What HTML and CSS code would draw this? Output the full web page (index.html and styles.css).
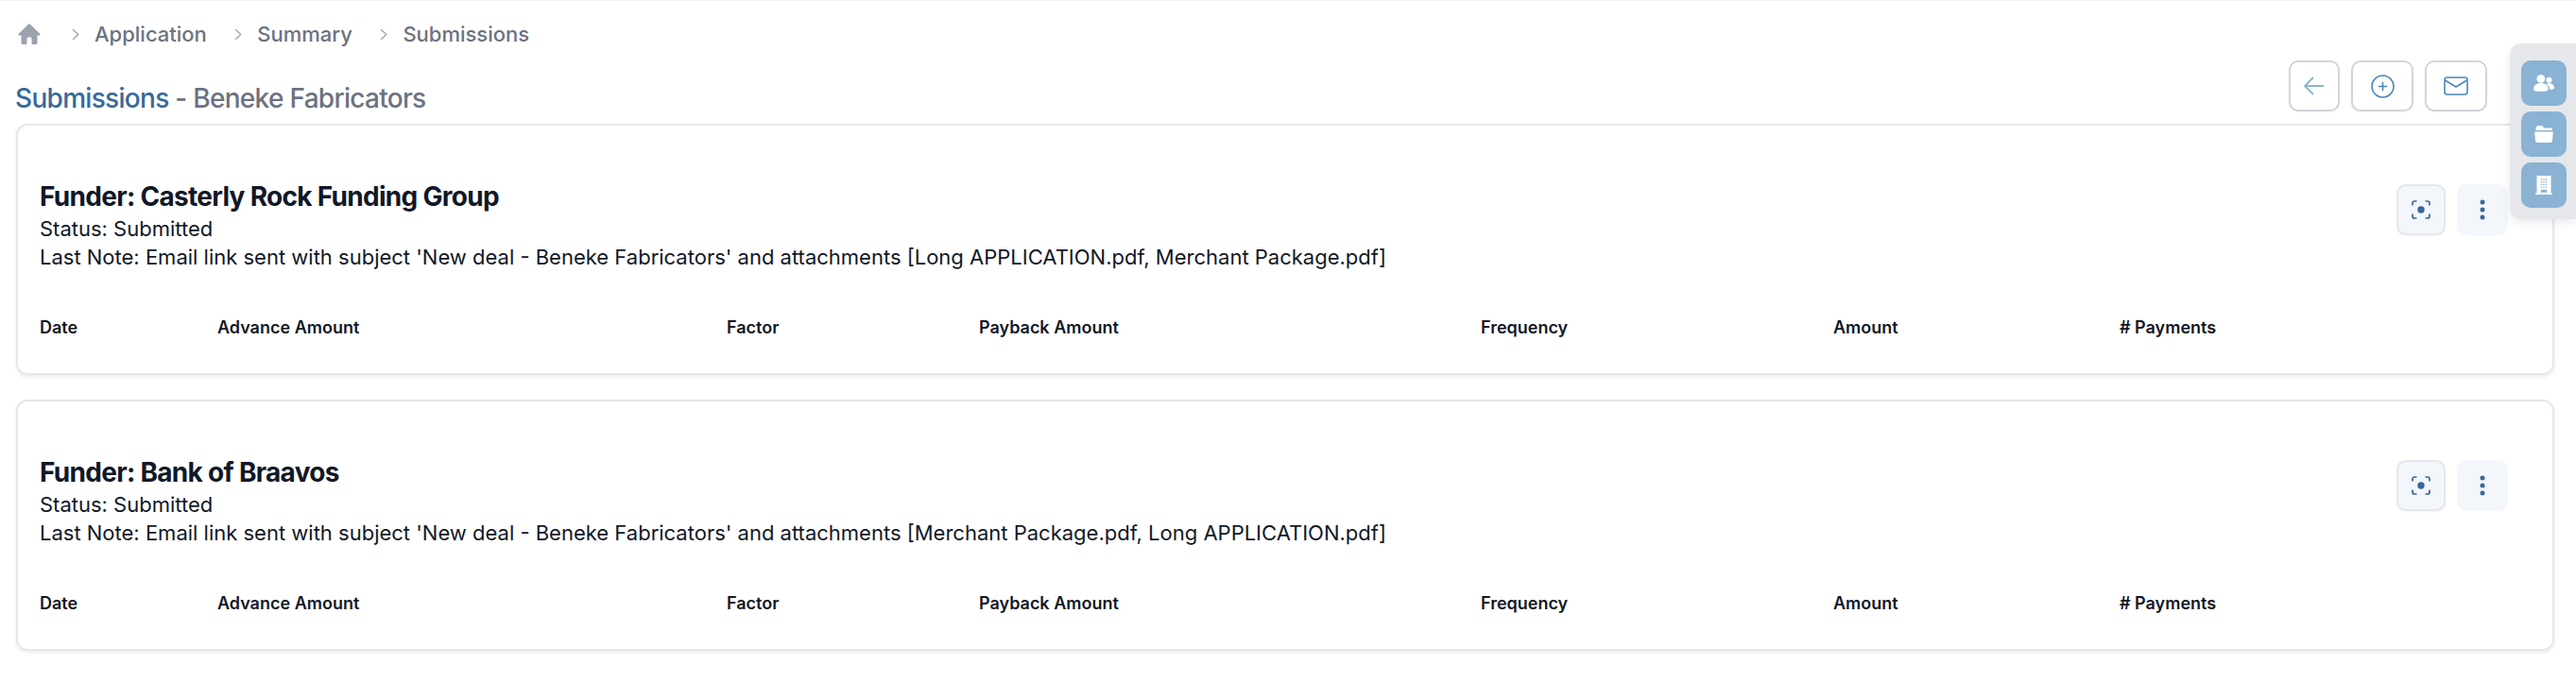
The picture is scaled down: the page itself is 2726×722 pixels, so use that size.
FILE: index.html
```html
<!DOCTYPE html>
<html lang="en">
<head>
    <meta charset="UTF-8">
    <meta name="viewport" content="width=device-width, initial-scale=1.0">
    <title>Submissions</title>
    <link rel="stylesheet" href="styles.css">
</head>
<body>
    <!-- Breadcrumb -->
    <nav class="breadcrumb">
        <svg class="home-icon" viewBox="0 0 24 24"><path d="M11.300 1.600a1 1 0 0 1 1.400 0l10.600 10.200c.6.6.2 1.700-.7 1.700H20.500v8.300c0 .7-.5 1.200-1.200 1.200h-3.600c-.7 0-1.200-.5-1.200-1.200v-5.100c0-.7-.5-1.200-1.200-1.200h-2.600c-.7 0-1.200.5-1.200 1.200v5.100c0 .7-.5 1.200-1.200 1.200H4.700c-.7 0-1.200-.5-1.200-1.200v-8.300H1.400c-.9 0-1.300-1.100-.7-1.700z"/></svg>
        <svg class="chevron" viewBox="0 0 10 16"><path d="M1.500 1.500 8.500 8l-7 6.500"/></svg>
        <span class="crumb">Application</span>
        <svg class="chevron" viewBox="0 0 10 16"><path d="M1.500 1.500 8.500 8l-7 6.500"/></svg>
        <span class="crumb">Summary</span>
        <svg class="chevron" viewBox="0 0 10 16"><path d="M1.500 1.500 8.500 8l-7 6.500"/></svg>
        <span class="crumb">Submissions</span>
    </nav>

    <!-- Page title and actions -->
    <header class="page-header">
        <h1 class="page-title"><span class="title-accent">Submissions</span> - Beneke Fabricators</h1>
        <div class="header-actions">
            <button class="header-btn header-btn-small">
                <svg class="icon-back" viewBox="0 0 24 24"><path d="M22 12H2M11 3l-9 9 9 9"/></svg>
            </button>
            <button class="header-btn">
                <svg class="icon-add" viewBox="0 0 24 24"><circle cx="12" cy="12" r="11"/><path d="M12 7.500v9M7.500 12h9"/></svg>
            </button>
            <button class="header-btn">
                <svg class="icon-mail" viewBox="0 0 26 20"><rect x="1" y="1" width="24" height="18" rx="2.500"/><path d="m1.500 4 11.500 7 11.500-7"/></svg>
            </button>
        </div>
    </header>

    <!-- Submission cards -->
    <section class="card">
        <div class="card-top">
            <div class="card-info">
                <h2 class="funder">Funder: Casterly Rock Funding Group</h2>
                <div class="info-line">Status: Submitted</div>
                <div class="info-line">Last Note: Email link sent with subject 'New deal - Beneke Fabricators' and attachments [Long APPLICATION.pdf, Merchant Package.pdf]</div>
            </div>
            <div class="card-actions">
                <button class="card-btn card-btn-outlined">
                    <svg class="icon-focus" viewBox="0 0 20 20"><path d="M1 5.500V3a2 2 0 0 1 2-2h2.500M14.500 1H17a2 2 0 0 1 2 2v2.500M19 14.500V17a2 2 0 0 1-2 2h-2.500M5.500 19H3a2 2 0 0 1-2-2v-2.500"/><circle class="dot" cx="10" cy="10" r="3.700"/></svg>
                </button>
                <button class="card-btn">
                    <svg class="icon-dots" viewBox="0 0 6 22"><circle cx="3" cy="3" r="2.500"/><circle cx="3" cy="11" r="2.500"/><circle cx="3" cy="19" r="2.500"/></svg>
                </button>
            </div>
        </div>
        <div class="quote-head">
            <span>Date</span>
            <span>Advance Amount</span>
            <span>Factor</span>
            <span>Payback Amount</span>
            <span>Frequency</span>
            <span>Amount</span>
            <span># Payments</span>
        </div>
    </section>

    <section class="card">
        <div class="card-top">
            <div class="card-info">
                <h2 class="funder">Funder: Bank of Braavos</h2>
                <div class="info-line">Status: Submitted</div>
                <div class="info-line">Last Note: Email link sent with subject 'New deal - Beneke Fabricators' and attachments [Merchant Package.pdf, Long APPLICATION.pdf]</div>
            </div>
            <div class="card-actions">
                <button class="card-btn card-btn-outlined">
                    <svg class="icon-focus" viewBox="0 0 20 20"><path d="M1 5.500V3a2 2 0 0 1 2-2h2.500M14.500 1H17a2 2 0 0 1 2 2v2.500M19 14.500V17a2 2 0 0 1-2 2h-2.500M5.500 19H3a2 2 0 0 1-2-2v-2.500"/><circle class="dot" cx="10" cy="10" r="3.700"/></svg>
                </button>
                <button class="card-btn">
                    <svg class="icon-dots" viewBox="0 0 6 22"><circle cx="3" cy="3" r="2.500"/><circle cx="3" cy="11" r="2.500"/><circle cx="3" cy="19" r="2.500"/></svg>
                </button>
            </div>
        </div>
        <div class="quote-head">
            <span>Date</span>
            <span>Advance Amount</span>
            <span>Factor</span>
            <span>Payback Amount</span>
            <span>Frequency</span>
            <span>Amount</span>
            <span># Payments</span>
        </div>
    </section>

    <!-- Floating side panel -->
    <aside class="side-panel">
        <button class="side-btn">
            <svg viewBox="0 0 24 20"><circle cx="8.500" cy="5" r="4.800"/><path d="M0 17c0-4.500 3.500-7 8.500-7s8.500 2.500 8.500 7c0 1.500-1.500 2.500-8.500 2.500S0 18.500 0 17z"/><circle cx="18" cy="6.500" r="3.300"/><path d="M14.500 11c1-.5 2.200-.8 3.500-.8 3.500 0 6 2 6 5.300 0 1.200-1.200 2-5 2 0-2.500-1.500-4.800-4.500-6.500z"/></svg>
        </button>
        <button class="side-btn">
            <svg viewBox="-1 -1 22 20"><path d="M1.500 5V2.500C1.500 1.100 2.600 0 4 0h3c1 0 1.600.4 2.200 1.200L10 2.500h7c1.200 0 2 .8 2 2V5z"/><path d="M.2 6.500h19.600L19 16c-.1 1.200-1 2-2.200 2H3.200C2 18 1.100 17.200 1 16z"/></svg>
        </button>
        <button class="side-btn">
            <svg viewBox="0 0 18 20"><path fill-rule="evenodd" d="M1.500 0h15v18.500H18V20H0v-1.500h1.500zM5.800 3v1.400h1.400V3zm2.500 0v1.400h1.400V3zm2.500 0v1.400h1.400V3zM5.800 5.800v1.400h1.400V5.800zm2.500 0v1.400h1.400V5.800zm2.500 0v1.400h1.400V5.800zM5.800 8.600V10h1.400V8.600zm2.500 0V10h1.400V8.600zm2.500 0V10h1.400V8.600zM5.800 11.400v1.400h1.400v-1.400zm2.500 0v1.400h1.400v-1.400zm2.500 0v1.400h1.400v-1.400zM5.800 14.800v3h6.400v-3z"/></svg>
        </button>
    </aside>
</body>
</html>
```

FILE: styles.css
```css
/* Page */
body {
    margin: 0;
    padding: 0 23px 0 17px;
    height: 722px;
    box-sizing: border-box;
    overflow: hidden;
    background-color: #fff;
    border-top: 1px solid #f3f4f6;
    font-family: Inter, "Liberation Sans", sans-serif;
    color: #111827;
}

button {
    display: flex;
    align-items: center;
    justify-content: center;
    padding: 0;
    cursor: pointer;
}

/* Breadcrumb */
.breadcrumb {
    display: flex;
    align-items: center;
    height: 30px;
    margin-top: 20px;
    margin-left: 2px;
}

.home-icon {
    width: 24px;
    height: 24px;
    fill: #9ca3af;
    margin-right: 33px;
}

.chevron {
    width: 8px;
    height: 13px;
    fill: none;
    stroke: #9ca3af;
    stroke-width: 1.6;
    margin-right: 16px;
}

.crumb {
    font-size: 22px;
    font-weight: 500;
    color: #6b7280;
    margin-right: 29.5px;
}

/* Page header */
.page-header {
    display: flex;
    justify-content: space-between;
    align-items: flex-start;
    height: 54px;
    margin-top: 13px;
    margin-bottom: 13px;
    padding-right: 71px;
}

.page-title {
    margin: 22px 0 0 -1px;
    font-size: 28px;
    line-height: 36px;
    font-weight: 500;
    letter-spacing: -0.025em;
    color: #6b7280;
}

.title-accent {
    color: #36699b;
}

.header-actions {
    display: flex;
    gap: 12px;
}

.header-btn {
    width: 66px;
    height: 54px;
    box-sizing: border-box;
    background-color: #fff;
    border: 2px solid #d1d5db;
    border-radius: 10px;
    box-shadow: 0 1px 2px rgba(0, 0, 0, 0.05);
}

.header-btn-small {
    width: 54px;
}

.header-btn svg {
    fill: none;
}

.icon-back {
    width: 24px;
    height: 24px;
    stroke: #8ab2d3;
    stroke-width: 1.8;
}

.icon-add {
    width: 25px;
    height: 25px;
    stroke: #4a86b8;
    stroke-width: 1.5;
}

.icon-mail {
    width: 26px;
    height: 20px;
    stroke: #4a86b8;
    stroke-width: 1.6;
}

/* Submission cards */
.card {
    box-sizing: border-box;
    height: 266px;
    margin-bottom: 26px;
    padding: 59px 47px 36px 23px;
    background-color: #fff;
    border: 2px solid #e5e7eb;
    border-radius: 12px;
    box-shadow: 0 2px 4px rgba(0, 0, 0, 0.08);
}

.card-top {
    display: flex;
    justify-content: space-between;
    align-items: flex-start;
}

.funder {
    margin: 0 0 3px;
    font-size: 28px;
    line-height: 32px;
    font-weight: 700;
    letter-spacing: -0.025em;
    color: #111827;
}

.info-line {
    font-size: 22px;
    line-height: 30px;
    color: #111827;
}

.card-actions {
    display: flex;
    gap: 12px;
    margin-top: 3px;
}

.card-btn {
    width: 54px;
    height: 54px;
    box-sizing: border-box;
    background-color: #f3f6fb;
    border: none;
    border-radius: 10px;
}

.card-btn-outlined {
    width: 52px;
    border: 2px solid #e5e7eb;
    box-shadow: 0 1px 2px rgba(0, 0, 0, 0.05);
}

.icon-focus {
    width: 20px;
    height: 20px;
    fill: none;
    stroke: #36699b;
    stroke-width: 1.7;
}

.icon-focus .dot {
    fill: #36699b;
    stroke: none;
}

.icon-dots {
    width: 6px;
    height: 22px;
    fill: #36699b;
}

.quote-head {
    display: grid;
    grid-template-columns: 188px 539px 267px 531px 373px 303px 1fr;
    margin-top: 48px;
    font-size: 18px;
    line-height: 24px;
    font-weight: 600;
    color: #111827;
}

/* Floating side panel */
.side-panel {
    position: fixed;
    top: 46px;
    right: 0;
    width: 70px;
    height: 186px;
    box-sizing: border-box;
    display: flex;
    flex-direction: column;
    gap: 6px;
    padding: 18px 10px 0 12px;
    background-color: #e5e7eb;
    border-radius: 12px 0 0 12px;
    box-shadow: 0 4px 10px rgba(0, 0, 0, 0.08);
}

.side-btn {
    width: 48px;
    height: 48px;
    background-color: #8ab2d3;
    border: none;
    border-radius: 10px;
}

.side-btn svg {
    width: 22px;
    height: 20px;
    fill: #fff;
}
```
